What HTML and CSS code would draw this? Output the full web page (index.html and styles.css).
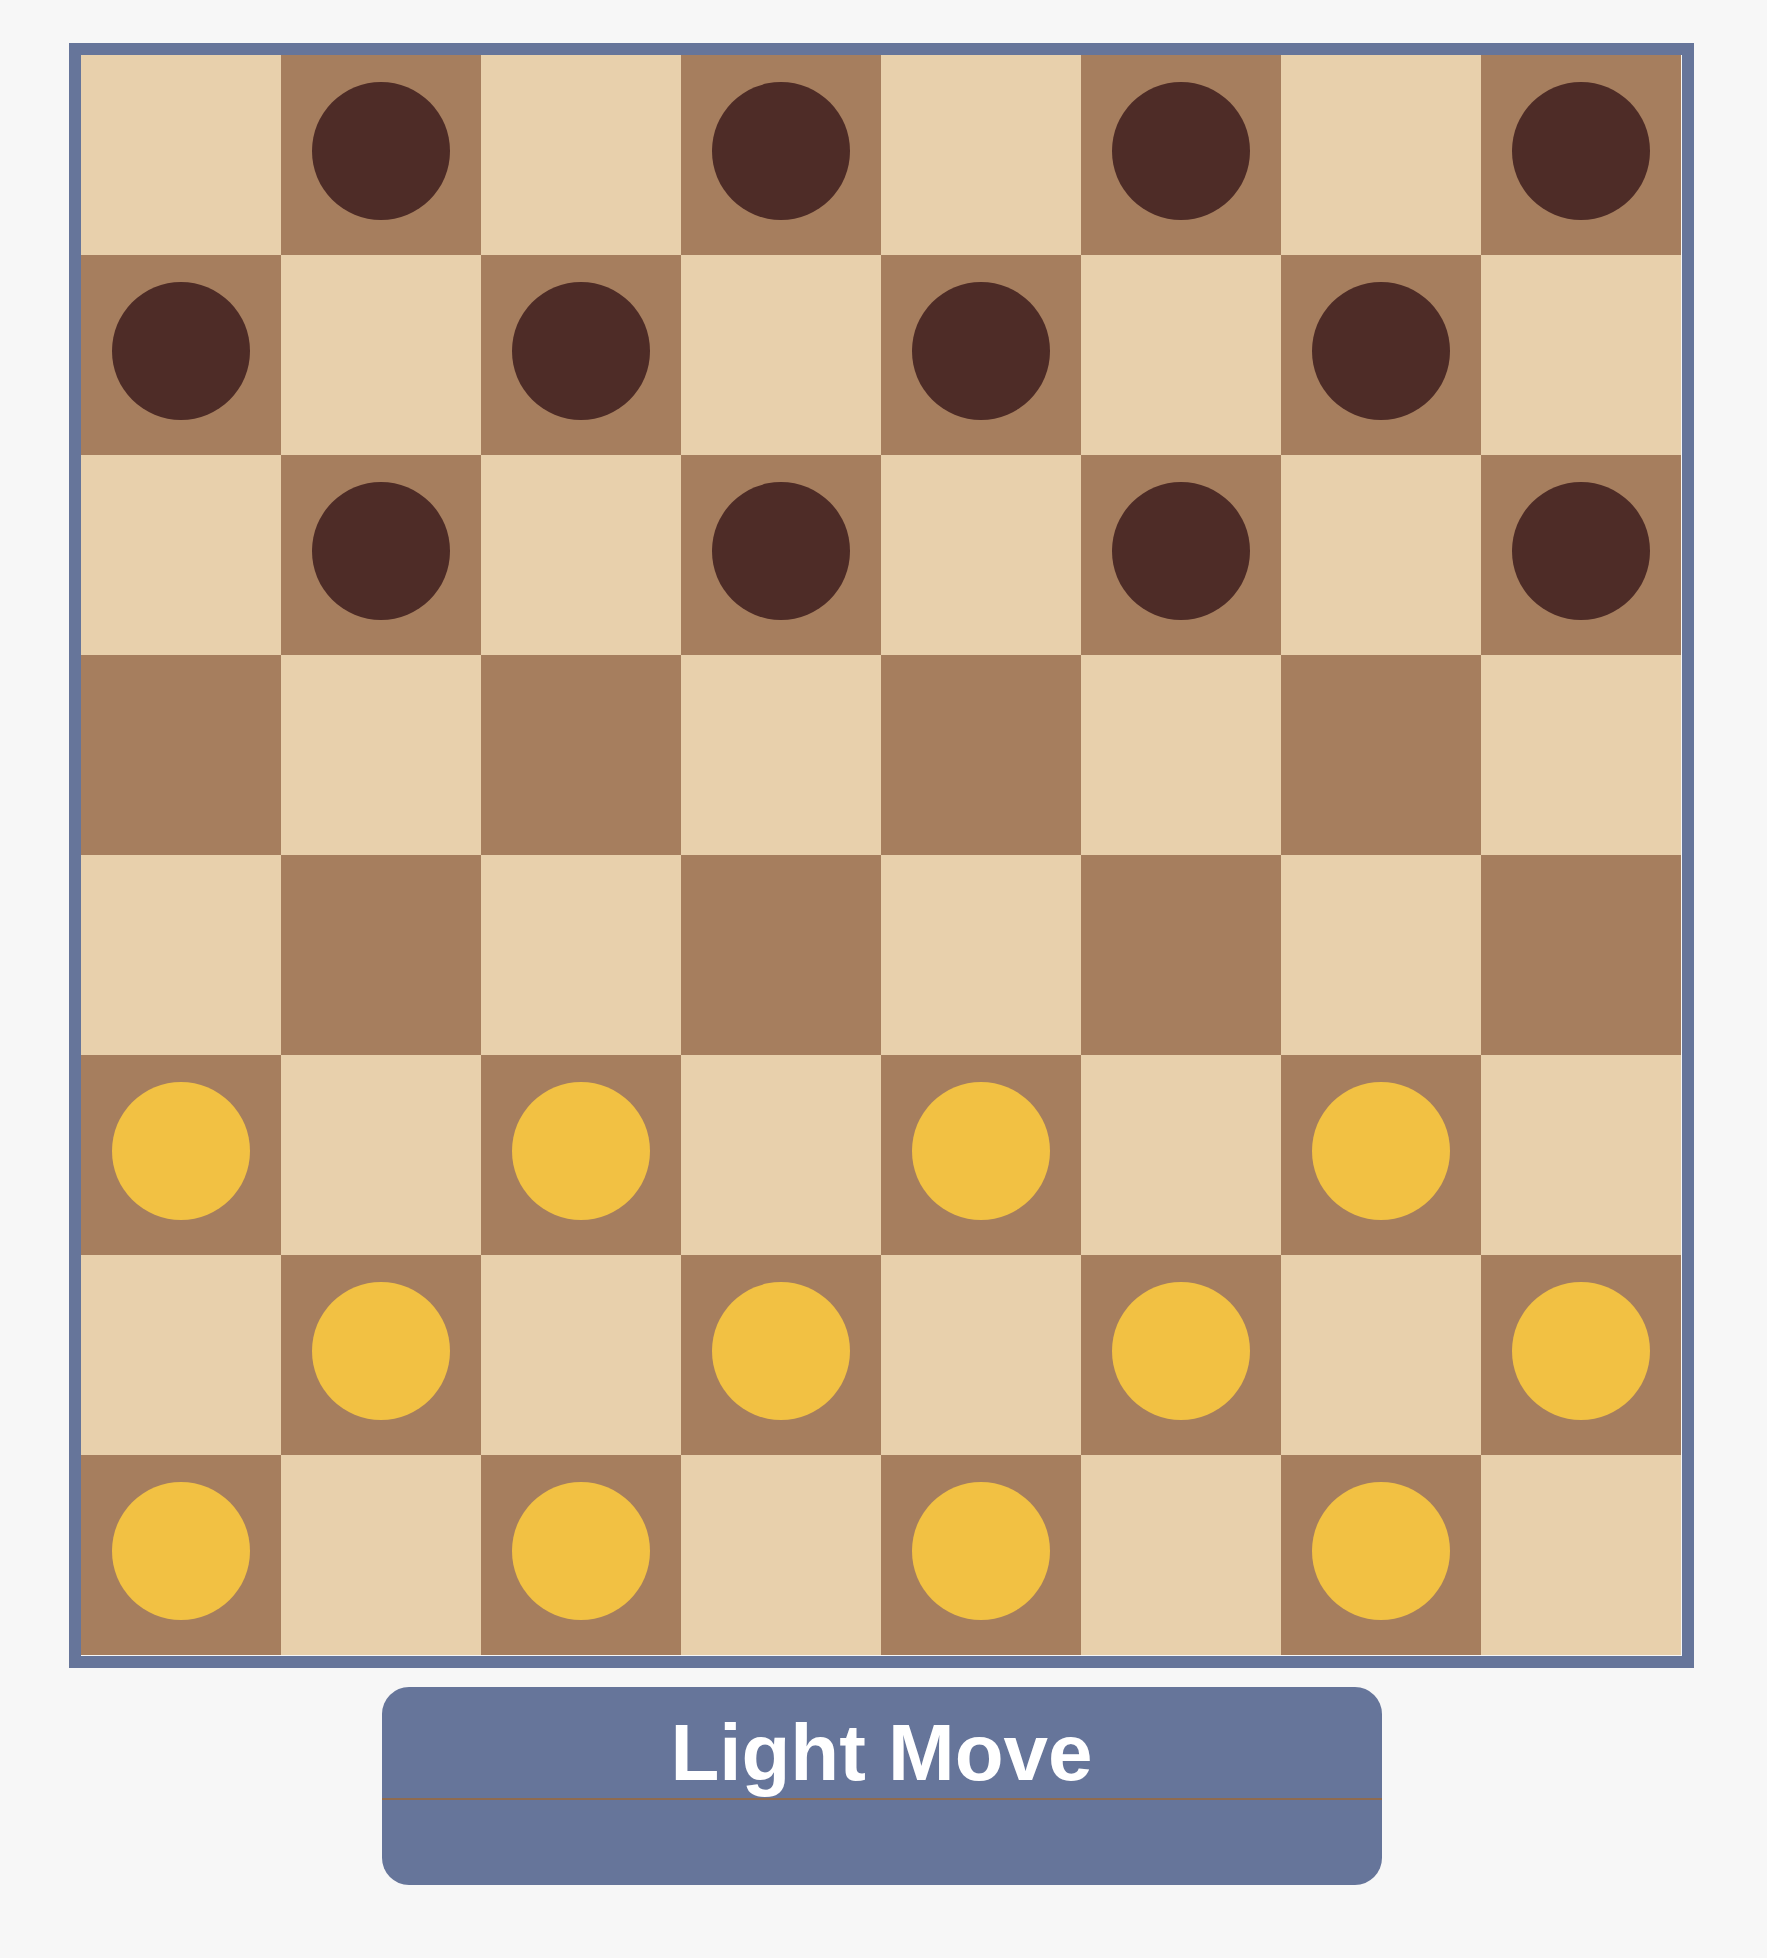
FILE: index.html
```html
<!DOCTYPE html>
<html>
<head>
<meta charset="utf-8">
<link rel="stylesheet" href="styles.css">
</head>
<body>
<div class="app">
  <div class="board">
    <div class="sq l"></div><div class="sq d"><div class="pc dark"></div></div><div class="sq l"></div><div class="sq d"><div class="pc dark"></div></div><div class="sq l"></div><div class="sq d"><div class="pc dark"></div></div><div class="sq l"></div><div class="sq d"><div class="pc dark"></div></div>
    <div class="sq d"><div class="pc dark"></div></div><div class="sq l"></div><div class="sq d"><div class="pc dark"></div></div><div class="sq l"></div><div class="sq d"><div class="pc dark"></div></div><div class="sq l"></div><div class="sq d"><div class="pc dark"></div></div><div class="sq l"></div>
    <div class="sq l"></div><div class="sq d"><div class="pc dark"></div></div><div class="sq l"></div><div class="sq d"><div class="pc dark"></div></div><div class="sq l"></div><div class="sq d"><div class="pc dark"></div></div><div class="sq l"></div><div class="sq d"><div class="pc dark"></div></div>
    <div class="sq d"></div><div class="sq l"></div><div class="sq d"></div><div class="sq l"></div><div class="sq d"></div><div class="sq l"></div><div class="sq d"></div><div class="sq l"></div>
    <div class="sq l"></div><div class="sq d"></div><div class="sq l"></div><div class="sq d"></div><div class="sq l"></div><div class="sq d"></div><div class="sq l"></div><div class="sq d"></div>
    <div class="sq d"><div class="pc light"></div></div><div class="sq l"></div><div class="sq d"><div class="pc light"></div></div><div class="sq l"></div><div class="sq d"><div class="pc light"></div></div><div class="sq l"></div><div class="sq d"><div class="pc light"></div></div><div class="sq l"></div>
    <div class="sq l"></div><div class="sq d"><div class="pc light"></div></div><div class="sq l"></div><div class="sq d"><div class="pc light"></div></div><div class="sq l"></div><div class="sq d"><div class="pc light"></div></div><div class="sq l"></div><div class="sq d"><div class="pc light"></div></div>
    <div class="sq d"><div class="pc light"></div></div><div class="sq l"></div><div class="sq d"><div class="pc light"></div></div><div class="sq l"></div><div class="sq d"><div class="pc light"></div></div><div class="sq l"></div><div class="sq d"><div class="pc light"></div></div><div class="sq l"></div>
  </div>
  <div class="panel">
    <div class="panel-title">Light Move</div>
    <div class="panel-body"></div>
  </div>
</div>
</body>
</html>
```

FILE: styles.css
```css
html, body {
  margin: 0;
  padding: 0;
  background: #f7f7f7;
  font-family: "Liberation Sans", Arial, sans-serif;
}
.app {
  width: 1625px;
  margin: 43px 0 0 69px;
  display: flex;
  flex-direction: column;
  align-items: center;
  gap: 19px;
}
.board {
  box-sizing: border-box;
  width: 1625px;
  height: 1625px;
  border: 12.5px solid #66759a;
  display: grid;
  grid-template-columns: repeat(8, 200px);
  grid-template-rows: repeat(8, 200px);
}
.sq {
  display: flex;
  justify-content: center;
  align-items: flex-start;
}
.sq.l { background: #e8d0ac; }
.sq.d { background: #a67e5e; }
.pc {
  width: 138px;
  height: 138px;
  border-radius: 50%;
  margin-top: 27px;
}
.pc.dark { background: #4e2c27; }
.pc.light { background: #f2c143; }
.panel {
  width: 1000px;
  background: #66759a;
  border-radius: 27px;
  display: flex;
  flex-direction: column;
}
.panel-title {
  box-sizing: border-box;
  height: 113px;
  padding-top: 18px;
  line-height: 95px;
  text-align: center;
  color: #ffffff;
  font-size: 80px;
  font-weight: bold;
  border-bottom: 2px solid #8f6b4f;
}
.panel-body {
  height: 85px;
}
```
